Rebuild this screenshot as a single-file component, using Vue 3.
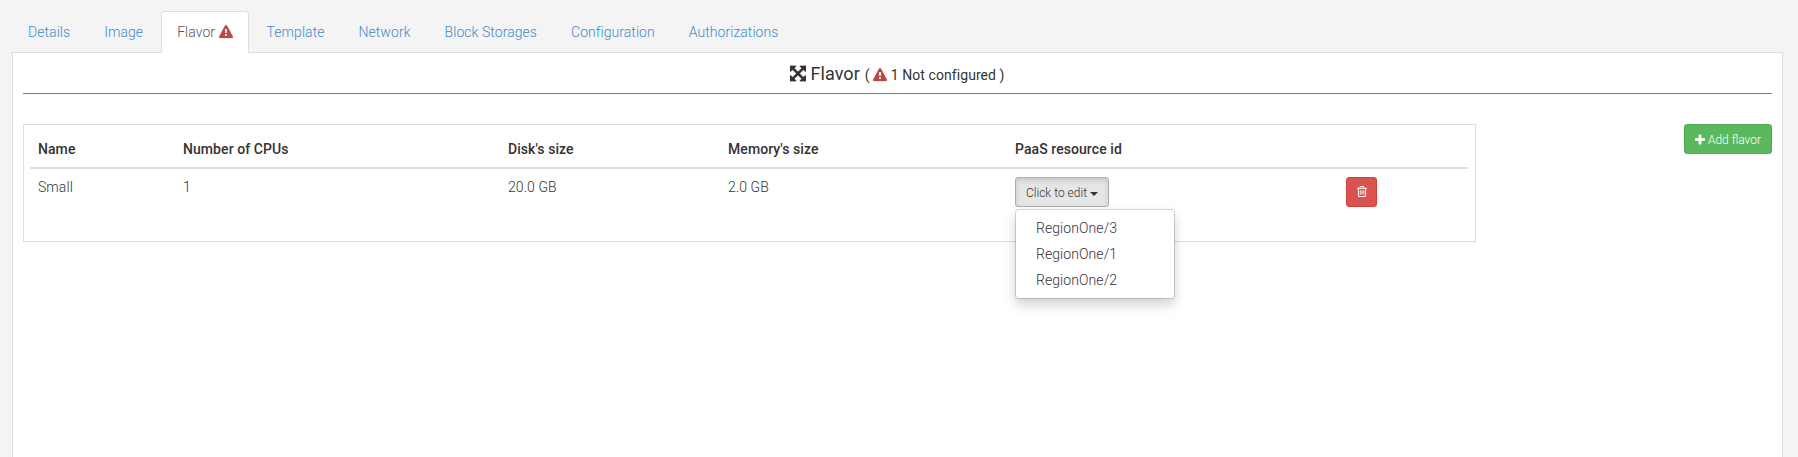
<script setup>
const tabs = ['Details', 'Image', 'Flavor', 'Template', 'Network', 'Block Storages', 'Configuration', 'Authorizations']
const activeTab = 'Flavor'
const columns = ['Name', 'Number of CPUs', "Disk's size", "Memory's size", 'PaaS resource id', '']
const regions = ['RegionOne/3', 'RegionOne/1', 'RegionOne/2']
const warningPath = 'M1024 1375v-190q0-14-9.500-23.500t-22.500-9.500h-192q-13 0-22.500 9.500t-9.500 23.500v190q0 14 9.500 23.500t22.500 9.500h192q13 0 22.500-9.500t9.500-23.500zm-2-374l18-459q0-12-10-19-13-11-24-11h-220q-11 0-24 11-10 7-10 21l17 457q0 10 10 16.500t24 6.500h185q14 0 23.500-6.500t10.500-16.500zm-14-934l768 1408q35 63-2 126-17 29-46.500 46t-63.500 17h-1536q-34 0-63.500-17t-46.500-46q-37-63-2-126l768-1408q17-31 47-49t65-18 65 18 47 49z'
</script>

<template>
  <div class="page">
    <ul class="tabs">
      <li v-for="tab in tabs" :key="tab">
        <a class="tab" :class="{ active: tab === activeTab }">{{ tab }}<template v-if="tab === activeTab">&nbsp;<svg class="warning" viewBox="0 0 1792 1792"><path :d="warningPath" /></svg></template></a>
      </li>
    </ul>
    <section class="panel">
      <h4 class="title">
        <svg class="arrows" viewBox="128 128 1536 1536"><path d="M1411 541l-355 355 355 355 144-144q29-31 70-14 39 17 39 59v448q0 26-19 45t-45 19h-448q-42 0-59-40-17-39 14-69l144-144-355-355-355 355 144 144q31 30 14 69-17 40-59 40h-448q-26 0-45-19t-19-45v-448q0-42 40-59 39-17 69 14l144 144 355-355-355-355-144 144q-19 19-45 19-12 0-24-5-40-17-40-59v-448q0-26 19-45t45-19h448q42 0 59 40 17 39-14 69l-144 144 355 355 355-355-144-144q-31-30-14-69 17-40 59-40h448q26 0 45 19t19 45v448q0 42-39 59-13 5-25 5-26 0-45-19z" /></svg>
        <span class="name">Flavor</span>
        <span class="status">( <svg class="warning" viewBox="0 0 1792 1792"><path :d="warningPath" /></svg> 1 Not configured )</span>
      </h4>
      <div class="content">
        <div class="box">
          <div class="row head">
            <div v-for="(column, i) in columns" :key="i">{{ column }}</div>
          </div>
          <div class="row">
            <div>Small</div>
            <div>1</div>
            <div>20.0 GB</div>
            <div>2.0 GB</div>
            <div>
              <div class="dropdown">
                <button class="btn select">Click to edit <span class="caret"></span></button>
                <ul class="menu">
                  <li v-for="region in regions" :key="region">{{ region }}</li>
                </ul>
              </div>
            </div>
            <div>
              <button class="btn danger" aria-label="Delete"><svg class="glyph trash" viewBox="192 128 1408 1536"><path d="M704 736v576q0 14-9 23t-23 9h-64q-14 0-23-9t-9-23v-576q0-14 9-23t23-9h64q14 0 23 9t9 23zm256 0v576q0 14-9 23t-23 9h-64q-14 0-23-9t-9-23v-576q0-14 9-23t23-9h64q14 0 23 9t9 23zm256 0v576q0 14-9 23t-23 9h-64q-14 0-23-9t-9-23v-576q0-14 9-23t23-9h64q14 0 23 9t9 23zm128 724v-948h-896v948q0 22 7 40.500t14.500 27 10.500 8.500h832q3 0 10.500-8.500t14.500-27 7-40.500zm-672-1076h448l-48-117q-7-9-17-11h-317q-10 2-17 11zm928 32v64q0 14-9 23t-23 9h-96v948q0 83-47 143.500t-113 60.500h-832q-66 0-113-58.500t-47-141.500v-952h-96q-14 0-23-9t-9-23v-64q0-14 9-23t23-9h309l70-167q15-37 54-63t79-26h320q40 0 79 26t54 63l70 167h309q14 0 23 9t9 23z" /></svg></button>
            </div>
          </div>
        </div>
        <button class="btn success"><svg class="glyph" viewBox="192 64 1408 1536"><path d="M1600 736v192q0 40-28 68t-68 28h-416v416q0 40-28 68t-68 28h-192q-40 0-68-28t-28-68v-416h-416q-40 0-68-28t-28-68v-192q0-40 28-68t68-28h416v-416q0-40 28-68t68-28h192q40 0 68 28t28 68v416h416q40 0 68 28t28 68z" /></svg> Add flavor</button>
      </div>
    </section>
  </div>
</template>

<style>
body {
  background: #f4f4f4;
  overflow: hidden;
}
</style>

<style scoped>
.page {
  box-sizing: border-box;
  height: 457px;
  padding: 11px 15px 0 12px;
  display: flex;
  flex-direction: column;
  overflow: hidden;
  font: 300 14px/20px Roboto, sans-serif;
  letter-spacing: 0.07px;
  color: #333;
}
ul {
  list-style: none;
  margin: 0;
  padding: 0;
}
svg {
  fill: currentColor;
}
.tabs {
  display: flex;
  gap: 2px;
  position: relative;
  z-index: 1;
  margin-bottom: -1px;
  letter-spacing: 0.055px;
}
.tab {
  display: block;
  padding: 10px 15px;
  border: 1px solid transparent;
  border-radius: 4px 4px 0 0;
  color: #428bca;
}
.tab.active {
  color: #555;
  background: #fff;
  border-color: #ddd;
  border-bottom-color: #fff;
}
.warning {
  width: 14px;
  height: 14px;
  color: #b94a48;
  vertical-align: -2px;
  overflow: visible;
  stroke: currentColor;
  stroke-width: 30;
}
.panel {
  flex: 1;
  background: #fff;
  border: 1px solid #ddd;
  border-bottom: 0;
  padding: 0 10px;
}
.title {
  display: flex;
  justify-content: center;
  align-items: baseline;
  box-sizing: border-box;
  height: 41px;
  margin: 0 0 30px;
  padding-top: 11px;
  border-bottom: 1px solid #428bca;
  font-weight: 400;
  font-size: 18px;
}
.arrows {
  width: 16px;
  height: 16px;
  margin-right: 4px;
  transform: translateY(1.5px);
  stroke: currentColor;
  stroke-width: 40;
}
.status {
  font-size: 14px;
  margin-left: 5px;
}
.content {
  display: flex;
  justify-content: space-between;
  align-items: flex-start;
}
.box {
  box-sizing: border-box;
  width: 1453px;
  height: 118px;
  padding: 6px 7px 6px 6px;
  border: 1px solid #ddd;
}
.row {
  display: grid;
  grid-template-columns: 145px 325px 220px 287px 331px 1fr;
}
.row > div {
  padding: 8px;
}
.head {
  font-weight: 500;
  border-bottom: 2px solid #ddd;
}
.btn {
  box-sizing: border-box;
  display: block;
  height: 30px;
  margin: 0;
  padding: 6px 10px 4px;
  border: 1px solid;
  border-radius: 3px;
  font: 300 12px/18px Roboto, sans-serif;
  white-space: nowrap;
}
.glyph {
  width: 10px;
  height: 11px;
  vertical-align: -1px;
}
.trash {
  vertical-align: -1px;
}
.select {
  color: #333;
  background: #e6e6e6;
  border-color: #adadad;
  box-shadow: inset 0 3px 5px rgba(0, 0, 0, 0.125);
}
.danger {
  width: 31px;
  padding: 5px 9px 5px 9.5px;
  color: #fff;
  background: #d9534f;
  border-color: #d43f3a;
}
.success {
  width: 88px;
  color: #fff;
  background: #5cb85c;
  border-color: #4cae4c;
}
.caret {
  display: inline-block;
  border-top: 4px solid;
  border-left: 4px solid transparent;
  border-right: 4px solid transparent;
  vertical-align: middle;
}
.dropdown {
  position: relative;
  width: max-content;
}
.menu {
  position: absolute;
  top: 100%;
  left: 0;
  box-sizing: border-box;
  width: 160px;
  margin-top: 2px;
  padding: 5px 0;
  background: #fff;
  border: 1px solid rgba(0, 0, 0, 0.15);
  background-clip: padding-box;
  border-radius: 4px;
  box-shadow: 0 6px 12px rgba(0, 0, 0, 0.175);
}
.menu li {
  padding: 3px 20px;
}
</style>
